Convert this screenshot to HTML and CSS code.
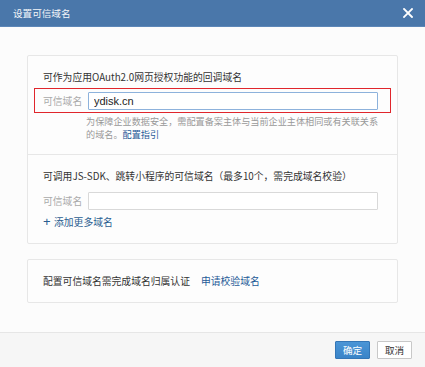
FILE: index.html
```html
<!DOCTYPE html>
<html lang="zh">
<head>
<meta charset="utf-8">
<title>设置可信域名</title>
<link rel="stylesheet" href="styles.css">
</head>
<body>
<div class="dialog">
  <div class="dlg-head">
    <span class="dlg-title">设置可信域名</span>
    <span class="dlg-close" aria-label="关闭">
      <svg width="10" height="10" viewBox="0 0 10 10"><path d="M1 1L9 9M9 1L1 9" stroke="#fff" stroke-width="1.8" stroke-linecap="square"/></svg>
    </span>
  </div>
  <div class="dlg-body">
    <div class="card">
      <div class="section">
        <div class="sec-title">可作为应用OAuth2.0网页授权功能的回调域名</div>
        <div class="row row-marked">
          <span class="label">可信域名</span>
          <input class="input input-focus" type="text" value="ydisk.cn">
        </div>
        <div class="help">为保障企业数据安全，需配置备案主体与当前企业主体相同或有关联关系的域名。<a class="link">配置指引</a></div>
      </div>
      <div class="section section-split">
        <div class="sec-title">可调用JS-SDK、跳转小程序的可信域名（最多10个，需完成域名校验）</div>
        <div class="row row-plain">
          <span class="label">可信域名</span>
          <input class="input" type="text" value="">
        </div>
        <div class="add-more"><span class="plus">+</span>添加更多域名</div>
      </div>
    </div>
    <div class="card card-note">
      <span class="note">配置可信域名需完成域名归属认证</span><a class="link note-link">申请校验域名</a>
    </div>
  </div>
  <div class="dlg-foot">
    <button class="btn btn-primary">确定</button>
    <button class="btn">取消</button>
  </div>
</div>
</body>
</html>
```
FILE: styles.css
```css
html, body {
  margin: 0;
  padding: 0;
}
body {
  width: 425px;
  height: 367px;
  overflow: hidden;
  background: #fcfcfc;
  font-family: "Noto Sans CJK SC", "Liberation Sans", sans-serif;
  font-size: 9.8px;
  color: #333;
}
.dialog {
  display: flex;
  flex-direction: column;
  height: 367px;
}
.dlg-head {
  height: 26px;
  background: #4a77aa;
  border-bottom: 1px solid #5d87b8;
  display: flex;
  align-items: center;
  justify-content: space-between;
  padding: 0 12px 0 13px;
}
.dlg-title {
  color: #f4f6f9;
  font-size: 9.6px;
  line-height: 14px;
}
.dlg-close {
  display: flex;
  width: 10px;
  height: 10px;
}
.dlg-body {
  flex: 1;
  padding: 28px 27px 0 27px;
}
.card {
  border: 1px solid #e7e7e7;
  border-radius: 2px;
  background: #fdfdfd;
}
.section {
  padding: 14px 15px 13px 15px;
}
.section-split {
  border-top: 1px solid #e7e7e7;
  padding-bottom: 14px;
}
.sec-title {
  line-height: 14px;
  color: #333;
}
.row {
  display: flex;
  align-items: center;
}
.row-marked {
  margin: 4px -9px 0 -9px;
  padding: 3px 6px 2px 8px;
  border: 1px solid #e0262c;
}
.row-plain {
  margin-top: 9px;
}
.label {
  width: 45px;
  color: #aaa;
  line-height: 14px;
}
.input {
  box-sizing: border-box;
  width: 290px;
  height: 18px;
  margin: 0;
  padding: 0 5px;
  border: 1px solid #d9d9d9;
  border-radius: 1px;
  background: #fff;
  font-family: "Liberation Sans", "Noto Sans CJK SC", sans-serif;
  font-size: 11px;
  color: #222;
  outline: none;
}
.input-focus {
  border-color: #8db2dc;
}
.help {
  margin-left: 43px;
  width: 300px;
  margin-top: 2px;
  line-height: 13px;
  font-size: 9.15px;
  color: #999;
}
.link {
  color: #1e5a97;
  text-decoration: none;
}
.add-more {
  margin-top: 5px;
  line-height: 14px;
  color: #2a5d91;
  display: flex;
  align-items: center;
}
.plus {
  font-family: "Liberation Sans", sans-serif;
  font-size: 13px;
  width: 11px;
  line-height: 14px;
}
.card-note {
  margin-top: 15px;
  padding: 14px 15px;
  line-height: 14px;
  display: flex;
}
.note-link {
  margin-left: 11px;
}
.dlg-foot {
  box-sizing: border-box;
  height: 35px;
  border-top: 1px solid #e6e6e6;
  background: #f6f6f6;
  display: flex;
  justify-content: flex-end;
  align-items: flex-start;
  gap: 7px;
  padding: 8px 13px 0 0;
}
.btn {
  box-sizing: border-box;
  width: 35px;
  height: 18px;
  padding: 0;
  border: 1px solid #c8c8c8;
  border-radius: 1px;
  background: #fff;
  font-family: "Noto Sans CJK SC", sans-serif;
  font-size: 9.6px;
  color: #333;
  line-height: 16px;
}
.btn-primary {
  background: linear-gradient(#4b95d6, #3a84c8);
  border-color: #3476b6;
  color: #fff;
}
```
